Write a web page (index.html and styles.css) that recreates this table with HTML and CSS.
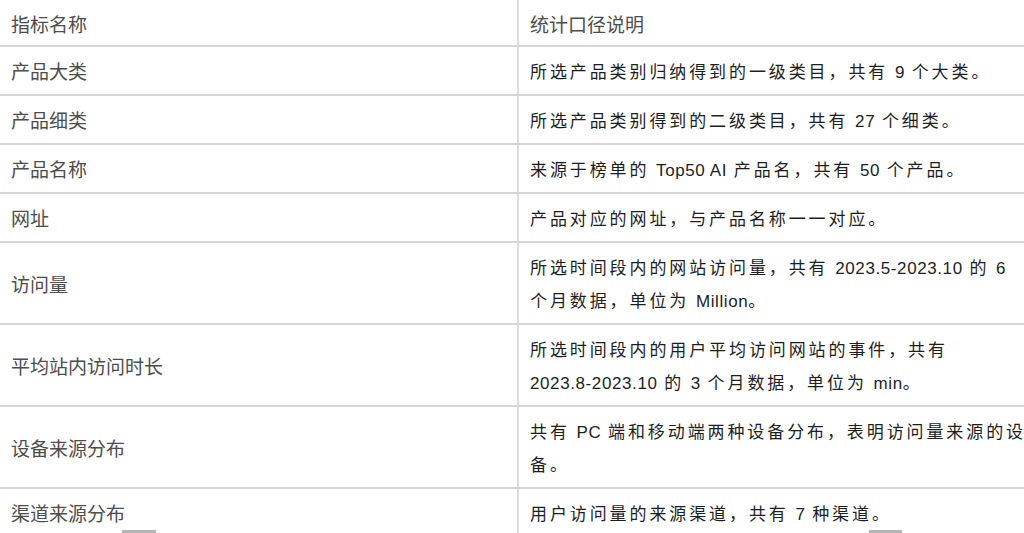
FILE: index.html
```html
<!DOCTYPE html>
<html lang="zh-CN">
<head>
<meta charset="utf-8">
<title>指标说明</title>
<link rel="stylesheet" href="styles.css">
</head>
<body>
<div class="page">
<table class="spec">
  <colgroup><col class="c-name"><col class="c-desc"></colgroup>
  <thead>
    <tr><th class="name">指标名称</th><th class="name head-desc">统计口径说明</th></tr>
  </thead>
  <tbody>
    <tr><td class="name">产品大类</td><td class="desc">所选产品类别归纳得到的一级类目，共有 <span class="en">9</span> 个大类。</td></tr>
    <tr><td class="name">产品细类</td><td class="desc">所选产品类别得到的二级类目，共有 <span class="en">27</span> 个细类。</td></tr>
    <tr><td class="name">产品名称</td><td class="desc">来源于榜单的 <span class="en">Top50 AI</span> 产品名，共有 <span class="en">50</span> 个产品。</td></tr>
    <tr><td class="name">网址</td><td class="desc">产品对应的网址，与产品名称一一对应。</td></tr>
    <tr><td class="name">访问量</td><td class="desc">所选时间段内的网站访问量，共有 <span class="en">2023.5-2023.10</span> 的 <span class="en">6</span> 个月数据，单位为 <span class="en">Million</span>。</td></tr>
    <tr><td class="name">平均站内访问时长</td><td class="desc">所选时间段内的用户平均访问网站的事件，共有 <span class="en">2023.8-2023.10</span> 的 <span class="en">3</span> 个月数据，单位为 <span class="en">min</span>。</td></tr>
    <tr><td class="name">设备来源分布</td><td class="desc">共有 <span class="en">PC</span> 端和移动端两种设备分布，表明访问量来源的设备。</td></tr>
    <tr><td class="name">渠道来源分布</td><td class="desc">用户访问量的来源渠道，共有 <span class="en">7</span> 种渠道。</td></tr>
  </tbody>
</table>
<span class="mark mark-left"></span>
<span class="mark mark-right"></span>
</div>
</body>
</html>
```

FILE: styles.css
```css
html, body {
  margin: 0;
  padding: 0;
  background: #ffffff;
}

.page {
  position: relative;
  width: 1024px;
  height: 533px;
  overflow: hidden;
}

.spec {
  width: 1030px;
  border-collapse: collapse;
  table-layout: fixed;
}

.c-name { width: 518px; }
.c-desc { width: 512px; }

.spec th,
.spec td {
  border-bottom: 2px solid #d6d6d6;
  padding: 7px 2px 7px 11px;
  vertical-align: middle;
  text-align: left;
  font-weight: normal;
}

.spec th:first-child,
.spec td:first-child {
  border-right: 2px solid #dcdcdc;
}

.spec thead th {
  padding-top: 7px;
  padding-bottom: 5px;
}

.name {
  font-family: "Noto Sans CJK SC", "Liberation Sans", sans-serif;
  font-size: 19px;
  line-height: 33px;
  color: #4d4d4d;
}

.desc {
  font-family: "Noto Sans CJK SC", "Liberation Sans", sans-serif;
  font-size: 17px;
  line-height: 33px;
  letter-spacing: 2.9px;
  color: #1e1e1e;
}

.desc .en {
  font-family: "Liberation Sans", "Noto Sans CJK SC", sans-serif;
  letter-spacing: 0.6px;
  line-height: 18px;
  white-space: nowrap;
}

.mark {
  position: absolute;
  top: 530px;
  height: 3px;
  background: #b4b4b4;
}

.mark-left { left: 122px; width: 34px; }
.mark-right { left: 869px; width: 33px; }
```
